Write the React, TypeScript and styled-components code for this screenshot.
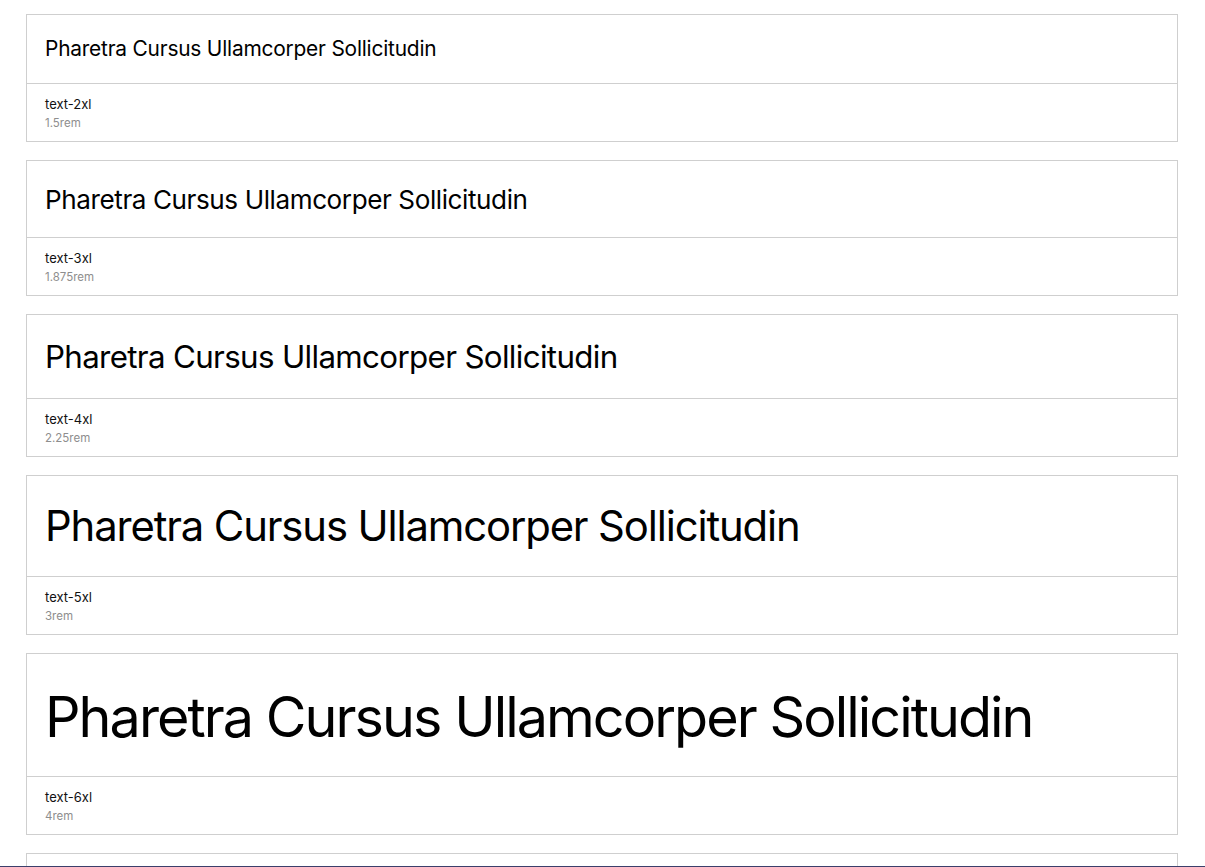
import React from "react";
import styled, { createGlobalStyle } from "styled-components";

const Global = createGlobalStyle`
  html, body { margin: 0; padding: 0; background: #fff; }
  body { font-family: Inter, "Noto Sans", sans-serif; color: #000; -webkit-font-smoothing: antialiased; }
`;

const Page = styled.main`
  width: 1152px;
  padding: 14px 27px 40px 26px;
  display: flex;
  flex-direction: column;
  gap: 18px;
`;

const Card = styled.section`
  border: 1px solid #cfcfcf;
  display: flex;
  flex-direction: column;
`;

const Sample = styled.div<{ $size: number; $h: number; $track: number }>`
  box-sizing: border-box;
  height: ${(p) => p.$h}px;
  display: flex;
  align-items: center;
  padding: ${(p) => (p.$size * 0.05).toFixed(1)}px 18px 0;
  font-size: ${(p) => p.$size}px;
  letter-spacing: ${(p) => p.$track}em;
  line-height: 1;
  border-bottom: 1px solid #cfcfcf;
  white-space: nowrap;
`;

const Meta = styled.div`
  height: 57px;
  display: flex;
  flex-direction: column;
  justify-content: center;
  padding: 0 18px;
  gap: 2px;
`;

const Name = styled.div`
  font-size: 13px;
  line-height: 18px;
  color: #111;
`;

const Value = styled.div`
  font-size: 11.5px;
  line-height: 16px;
  color: #8e8e8e;
`;

const BottomEdge = styled.div`
  position: fixed;
  left: 0;
  right: 0;
  bottom: 0;
  height: 1px;
  background: #3b3f6b;
`;

const rows = [
  { name: "text-2xl", value: "1.5rem", size: 20.9, track: -0.01, h: 69 },
  { name: "text-3xl", value: "1.875rem", size: 26.1, track: -0.016, h: 77 },
  { name: "text-4xl", value: "2.25rem", size: 31.3, track: -0.021, h: 84 },
  { name: "text-5xl", value: "3rem", size: 41.8, track: -0.027, h: 101 },
  { name: "text-6xl", value: "4rem", size: 55.7, track: -0.035, h: 123 },
  { name: "text-7xl", value: "4.5rem", size: 62.7, track: -0.037, h: 133 },
];

export default function App() {
  return (
    <>
      <Global />
      <Page>
        {rows.map((r) => (
          <Card key={r.name}>
            <Sample $size={r.size} $h={r.h} $track={r.track}>
              Pharetra Cursus Ullamcorper Sollicitudin
            </Sample>
            <Meta>
              <Name>{r.name}</Name>
              <Value>{r.value}</Value>
            </Meta>
          </Card>
        ))}
      </Page>
      <BottomEdge />
    </>
  );
}
